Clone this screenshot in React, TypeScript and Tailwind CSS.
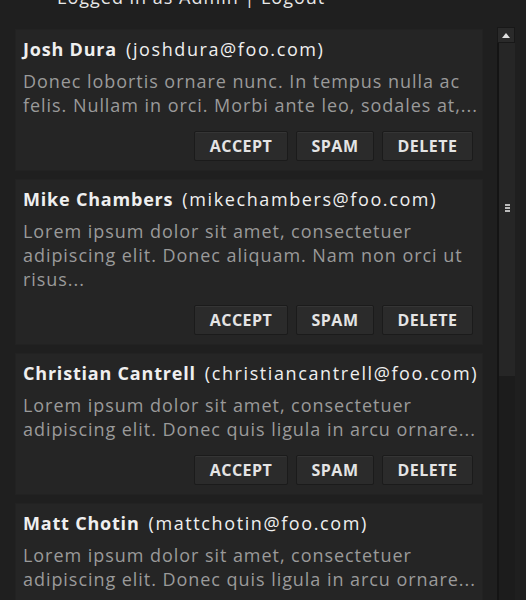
import React from "react";

type Message = {
    name: string;
    email: string;
    body: string[];
};

const messages: Message[] = [
    {
        name: "Josh Dura",
        email: "joshdura@foo.com",
        body: ["Donec lobortis ornare nunc. In tempus nulla ac", "felis. Nullam in orci. Morbi ante leo, sodales at,..."],
    },
    {
        name: "Mike Chambers",
        email: "mikechambers@foo.com",
        body: ["Lorem ipsum dolor sit amet, consectetuer", "adipiscing elit. Donec aliquam. Nam non orci ut", "risus..."],
    },
    {
        name: "Christian Cantrell",
        email: "christiancantrell@foo.com",
        body: ["Lorem ipsum dolor sit amet, consectetuer", "adipiscing elit. Donec quis ligula in arcu ornare..."],
    },
    {
        name: "Matt Chotin",
        email: "mattchotin@foo.com",
        body: ["Lorem ipsum dolor sit amet, consectetuer", "adipiscing elit. Donec quis ligula in arcu ornare..."],
    },
];

const ActionButton = ({ label, width }: { label: string; width: string }) => (
    <button
        className={`${width} h-[30px] flex items-center justify-center rounded-[2px] border border-[#1b1b1b] bg-[#2b2b2b] text-[16px] font-bold tracking-[0.5px] text-[#e4e4e4] shadow-[inset_0_1px_0_#353535]`}
    >
        {label}
    </button>
);

const MessageCard = ({ msg }: { msg: Message }) => (
    <div className="bg-[#252525] border border-[#222] pl-[7px] pr-[9px] pt-[6px] pb-[9px]">
        <div className="text-[18px] leading-[26px] text-[#efefef] whitespace-nowrap">
            <span className="font-bold tracking-[0.8px]">{msg.name}</span>
            <span className="ml-[9px] tracking-[1.6px]">({msg.email})</span>
        </div>
        <div className="mt-[7px] text-[18px] leading-[24px] tracking-[0.95px] text-[#9a9a9a] whitespace-nowrap">
            {msg.body.map((line) => (
                <div key={line}>{line}</div>
            ))}
        </div>
        <div className="mt-[14px] flex justify-end gap-[8px]">
            <ActionButton label="ACCEPT" width="w-[94px]" />
            <ActionButton label="SPAM" width="w-[78px]" />
            <ActionButton label="DELETE" width="w-[91px]" />
        </div>
    </div>
);

export default function App() {
    return (
        <div
            className="w-[526px] h-[600px] overflow-hidden bg-[#1f1f1f]"
            style={{ fontFamily: '"Open Sans", "Noto Sans", sans-serif' }}
        >
            <div className="mt-[-13px] pl-[57px] text-[18px] leading-[20px] tracking-[1px] text-[#e8e8e8] whitespace-nowrap">
                Logged in as Admin | Logout
            </div>
            <div className="flex mt-[20px]">
                <div className="ml-[15px] w-[468px] flex flex-col gap-[8px] pt-[2px]">
                    {messages.map((m) => (
                        <MessageCard key={m.email} msg={m} />
                    ))}
                </div>
                <div className="ml-[14px] w-[18px] h-[600px] flex flex-col">
                    <div className="h-[16px] bg-[#2a2a2a] border border-[#181818] flex items-center justify-center">
                        <svg width="8" height="5" viewBox="0 0 8 5">
                            <path d="M0 5 L4 0 L8 5 Z" fill="#e0e0e0" />
                        </svg>
                    </div>
                    <div className="h-[333px] bg-[#262626] border-l-[2px] border-[#141414] flex items-center justify-center">
                        <div className="flex flex-col gap-[1px] -mt-[4px]">
                            <div className="w-[5px] h-[2px] bg-[#bbb]" />
                            <div className="w-[5px] h-[2px] bg-[#bbb]" />
                            <div className="w-[5px] h-[2px] bg-[#bbb]" />
                        </div>
                    </div>
                    <div className="flex-1 bg-[#1c1c1c] border-l-[2px] border-[#141414]" />
                </div>
            </div>
        </div>
    );
}
